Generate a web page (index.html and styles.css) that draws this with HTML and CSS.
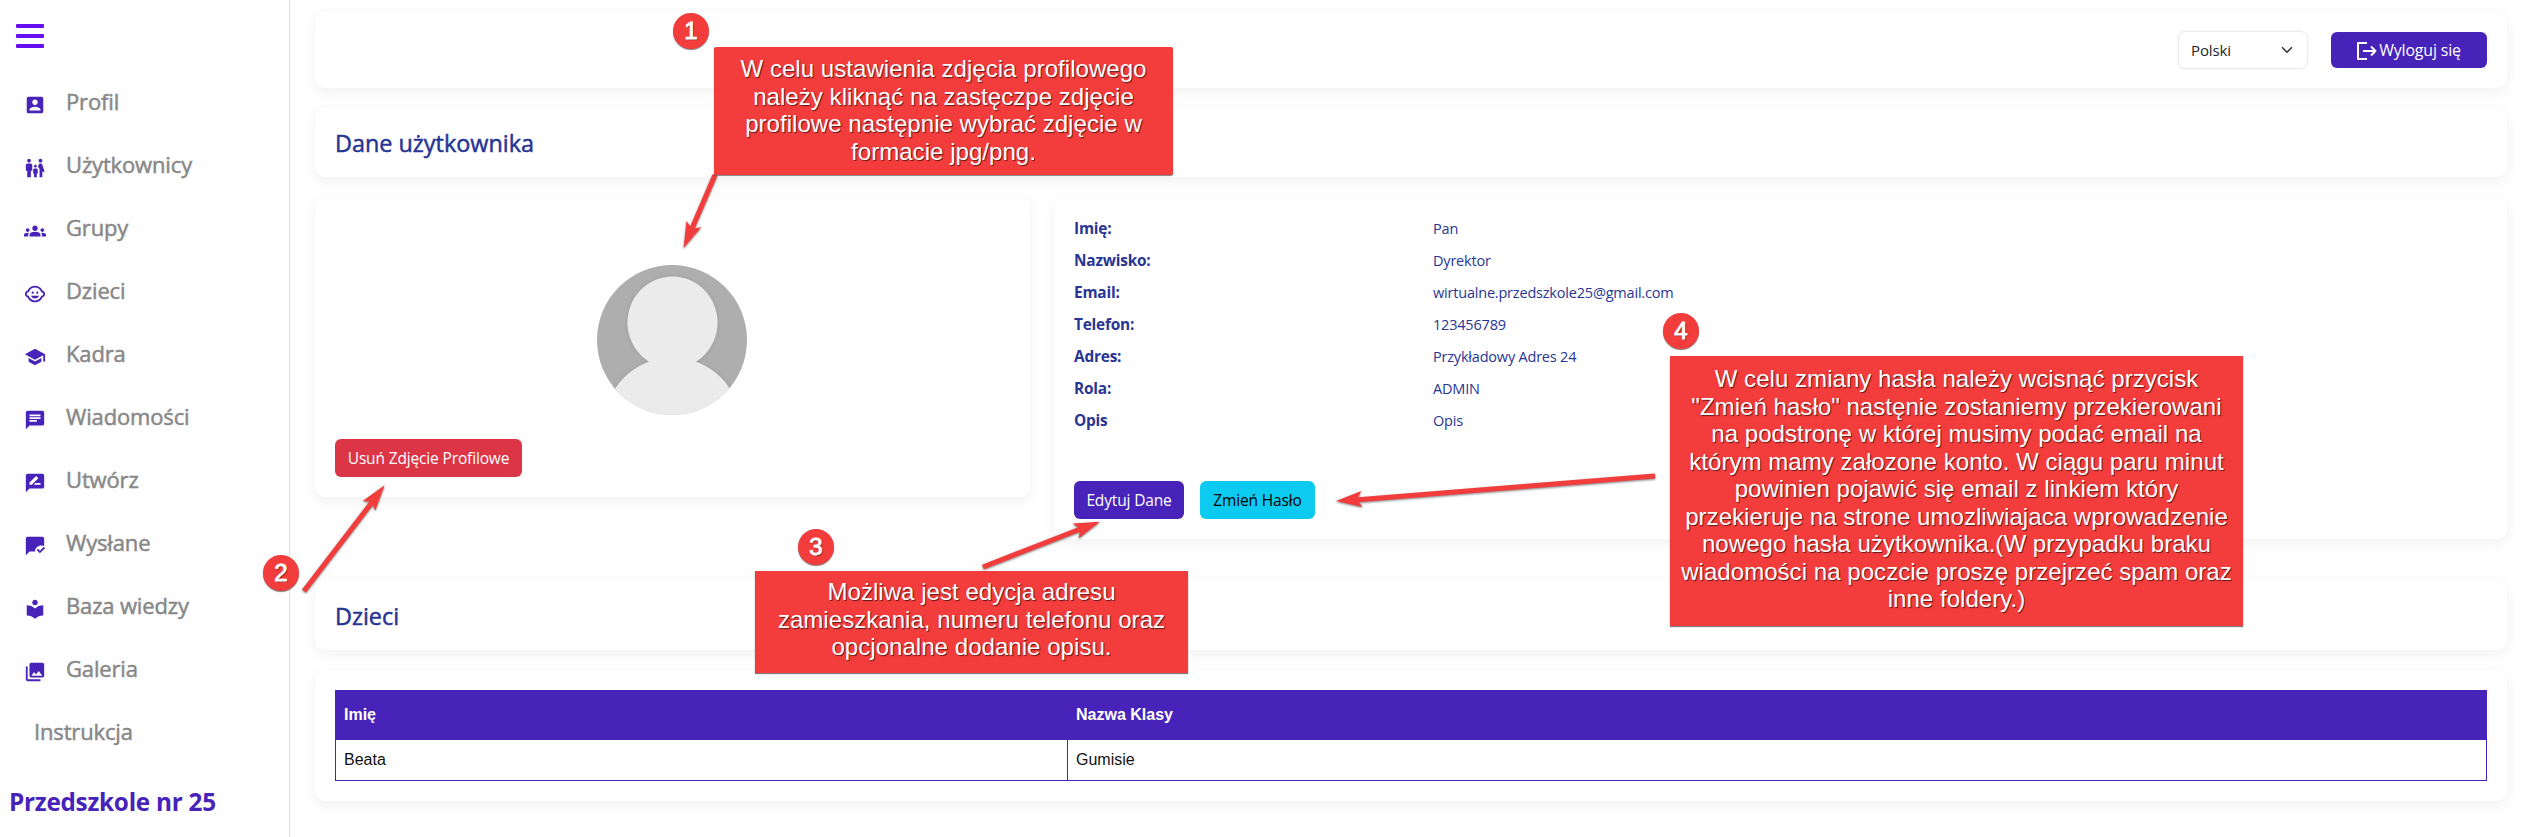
FILE: index.html
```html
<!DOCTYPE html>
<html lang="pl">
<head>
<meta charset="utf-8">
<title>Przedszkole nr 25</title>
<link rel="stylesheet" href="styles.css">
</head>
<body>
<div class="app">
  <aside class="sidebar">
    <button class="burger" aria-label="Menu"><span></span><span></span><span></span></button>
    <nav class="menu">
      <a class="item"><svg viewBox="0 0 24 24"><path d="M3 5v14c0 1.1.89 2 2 2h14c1.1 0 2-.9 2-2V5c0-1.1-.9-2-2-2H5c-1.11 0-2 .9-2 2zm12 4c0 1.66-1.34 3-3 3s-3-1.34-3-3 1.34-3 3-3 3 1.34 3 3zm-9 8c0-2 4-3.1 6-3.1s6 1.1 6 3.1v1H6v-1z"/></svg><span>Profil</span></a>
      <a class="item"><svg viewBox="0 0 24 24"><path d="M16 4c0-1.11.89-2 2-2s2 .89 2 2-.89 2-2 2-2-.89-2-2zm4 18v-6h2.5l-2.54-7.63C19.68 7.55 18.92 7 18.06 7h-.12c-.86 0-1.63.55-1.9 1.37l-.86 2.58c1.08.6 1.82 1.73 1.82 3.05v8h3zm-7.5-10.5c.83 0 1.5-.67 1.5-1.5s-.67-1.5-1.5-1.5S11 9.17 11 10s.67 1.5 1.5 1.5zM5.5 6c1.11 0 2-.89 2-2s-.89-2-2-2-2 .89-2 2 .89 2 2 2zm2 16v-7H9V9c0-1.1-.9-2-2-2H4c-1.1 0-2 .9-2 2v6h1.5v7h4zm6.5 0v-4h1v-4c0-.82-.68-1.5-1.5-1.5h-2c-.82 0-1.5.68-1.5 1.5v4h1v4h3z"/></svg><span>Użytkownicy</span></a>
      <a class="item"><svg viewBox="0 0 24 24"><path d="M12 12.75c1.63 0 3.07.39 4.24.9 1.08.48 1.76 1.56 1.76 2.73V18H6v-1.61c0-1.18.68-2.26 1.76-2.73 1.17-.52 2.61-.91 4.24-.91zM4 13c1.1 0 2-.9 2-2s-.9-2-2-2-2 .9-2 2 .9 2 2 2zm1.13 1.1c-.37-.06-.74-.1-1.13-.1-.99 0-1.93.21-2.78.58C.48 14.9 0 15.62 0 16.43V18h4.5v-1.61c0-.83.23-1.61.63-2.29zM20 13c1.1 0 2-.9 2-2s-.9-2-2-2-2 .9-2 2 .9 2 2 2zm4 3.43c0-.81-.48-1.53-1.22-1.85-.85-.37-1.79-.58-2.78-.58-.39 0-.76.04-1.13.1.4.68.63 1.46.63 2.29V18H24v-1.57zM12 6c1.66 0 3 1.34 3 3s-1.34 3-3 3-3-1.34-3-3 1.34-3 3-3z"/></svg><span>Grupy</span></a>
      <a class="item"><svg viewBox="0 0 24 24"><circle cx="14.5" cy="10.5" r="1.25"/><circle cx="9.5" cy="10.5" r="1.25"/><path d="M22.94 12.66c.04-.21.06-.43.06-.66s-.02-.45-.06-.66c-.25-1.51-1.36-2.74-2.81-3.17-.53-1.12-1.28-2.1-2.19-2.91C16.36 3.85 14.28 3 12 3s-4.36.85-5.94 2.26c-.92.81-1.67 1.8-2.19 2.91-1.45.43-2.56 1.65-2.81 3.17-.04.21-.06.43-.06.66s.02.45.06.66c.25 1.51 1.36 2.74 2.81 3.17.52 1.11 1.27 2.09 2.17 2.89C7.62 20.14 9.71 21 12 21s4.38-.86 5.97-2.28c.9-.8 1.65-1.79 2.17-2.89 1.44-.43 2.55-1.65 2.8-3.17zM19 14c-.1 0-.19-.02-.29-.03-.2.67-.49 1.29-.86 1.86C16.6 17.74 14.45 19 12 19s-4.6-1.26-5.85-3.17c-.37-.57-.66-1.19-.86-1.86-.1.01-.19.03-.29.03-1.1 0-2-.9-2-2s.9-2 2-2c.1 0 .19.02.29.03.2-.67.49-1.29.86-1.86C7.4 6.26 9.55 5 12 5s4.6 1.26 5.85 3.17c.37.57.66 1.19.86 1.86.1-.01.19-.03.29-.03 1.1 0 2 .9 2 2s-.9 2-2 2zM7.5 14c.76 1.77 2.49 3 4.5 3s3.74-1.23 4.5-3h-9z"/></svg><span>Dzieci</span></a>
      <a class="item"><svg viewBox="0 0 24 24"><path d="M5 13.18v4L12 21l7-3.82v-4L12 17l-7-3.82zM12 3L1 9l11 6 9-4.91V17h2V9L12 3z"/></svg><span>Kadra</span></a>
      <a class="item"><svg viewBox="0 0 24 24"><path d="M20 2H4c-1.1 0-1.99.9-1.99 2L2 22l4-4h14c1.1 0 2-.9 2-2V4c0-1.1-.9-2-2-2zM6 9h12v2H6V9zm8 5H6v-2h8v2zm4-6H6V6h12v2z"/></svg><span>Wiadomości</span></a>
      <a class="item"><svg viewBox="0 0 24 24"><path d="M20 2H4c-1.1 0-1.99.9-1.99 2L2 22l4-4h14c1.1 0 2-.9 2-2V4c0-1.1-.9-2-2-2zM6 14v-2.47l6.88-6.88c.2-.2.51-.2.71 0l1.77 1.77c.2.2.2.51 0 .71L8.47 14H6zm12 0h-7.5l2-2H18v2z"/></svg><span>Utwórz</span></a>
      <a class="item"><svg viewBox="0 0 24 24"><path d="M12 18H6l-4 4V4c0-1.1.9-2 2-2h16c1.1 0 2 .9 2 2v8.080A6.980 6.980 0 0 0 19 11.500c-3.870 0-7 2.900-7 6.500zm11-3.660-1.410-1.410-4.240 4.240-2.120-2.120-1.410 1.410L17.340 20z"/></svg><span>Wysłane</span></a>
      <a class="item"><svg viewBox="0 0 24 24"><path d="M12 11.550C9.640 9.350 6.480 8 3 8v11c3.480 0 6.640 1.350 9 3.550 2.360-2.190 5.520-3.550 9-3.550V8c-3.480 0-6.640 1.350-9 3.550zM12 8c1.660 0 3-1.340 3-3s-1.340-3-3-3-3 1.340-3 3 1.340 3 3 3z"/></svg><span>Baza wiedzy</span></a>
      <a class="item"><svg viewBox="0 0 24 24"><path d="M22 16V4c0-1.100-.900-2-2-2H8c-1.100 0-2 .900-2 2v12c0 1.100.900 2 2 2h12c1.100 0 2-.900 2-2zm-11-4l2.030 2.710L16 11l4 5H8l3-4zM2 6v14c0 1.100.900 2 2 2h14v-2H4V6H2z"/></svg><span>Galeria</span></a>
      <a class="item plain"><span>Instrukcja</span></a>
    </nav>
    <div class="brand">Przedszkole nr 25</div>
  </aside>

  <main class="main">
    <header class="card topbar">
      <div class="select"><span>Polski</span><svg viewBox="0 0 16 16"><path d="m2 5 6 6 6-6"/></svg></div>
      <button class="btn logout"><svg viewBox="0 0 20 18"><path d="M10 1H1v16h9M6 9h12M14 4.500 18.500 9 14 13.500"/></svg><span>Wyloguj się</span></button>
    </header>
    <section class="card title"><h2>Dane użytkownika</h2></section>
    <div class="profile">
      <section class="card photo">
        <svg class="avatar" viewBox="0 0 150 150">
          <defs>
            <clipPath id="round"><circle cx="75" cy="75" r="75"/></clipPath>
            <filter id="soft"><feDropShadow dx="0" dy="0" stdDeviation="2" flood-color="#888" flood-opacity=".5"/></filter>
          </defs>
          <g clip-path="url(#round)">
            <rect width="150" height="150" fill="#aeaeae"/>
            <g fill="#ebebeb" filter="url(#soft)"><ellipse cx="75.500" cy="57.500" rx="45" ry="46"/><circle cx="75.500" cy="161" r="68.500"/></g>
          </g>
        </svg>
        <button class="btn danger">Usuń Zdjęcie Profilowe</button>
      </section>
      <section class="card info">
        <dl class="details">
          <dt>Imię:</dt><dd>Pan</dd>
          <dt>Nazwisko:</dt><dd>Dyrektor</dd>
          <dt>Email:</dt><dd>wirtualne.przedszkole25@gmail.com</dd>
          <dt>Telefon:</dt><dd>123456789</dd>
          <dt>Adres:</dt><dd>Przykładowy Adres 24</dd>
          <dt>Rola:</dt><dd>ADMIN</dd>
          <dt>Opis</dt><dd>Opis</dd>
        </dl>
        <div class="actions">
          <button class="btn edit">Edytuj Dane</button>
          <button class="btn password">Zmień Hasło</button>
        </div>
      </section>
    </div>
    <section class="card title second"><h2>Dzieci</h2></section>
    <section class="card list">
      <table>
        <thead><tr><th class="first">Imię</th><th>Nazwa Klasy</th></tr></thead>
        <tbody><tr><td>Beata</td><td>Gumisie</td></tr></tbody>
      </table>
    </section>
  </main>
</div>

<div class="notes">
  <svg class="arrows" viewBox="0 0 2527 837">
    <defs>
      <marker id="head" viewBox="0 0 26 16" refX="25" refY="8" markerWidth="26" markerHeight="16" markerUnits="userSpaceOnUse" orient="auto"><path d="M26 8 0 0 5 8 0 16z" fill="#f33c3c"/></marker>
    </defs>
    <g stroke="#f33c3c" stroke-width="5" fill="none">
      <path d="M715 175 690.500 232"/><path d="M715 175 684 247" stroke="none" marker-end="url(#head)"/>
      <path d="M304 591 373 501"/><path d="M304 591 384 486" stroke="none" marker-end="url(#head)"/>
      <path d="M983 567 1083 528"/><path d="M983 567 1099 522" stroke="none" marker-end="url(#head)"/>
      <path d="M1655 476 1355 500"/><path d="M1655 476 1337 501" stroke="none" marker-end="url(#head)"/>
    </g>
  </svg>
  <span class="num n1">1</span><span class="num n2">2</span><span class="num n3">3</span><span class="num n4">4</span>
  <p class="note b1">W celu ustawienia zdjęcia profilowego<br>należy kliknąć na zastęczpe zdjęcie<br>profilowe następnie wybrać zdjęcie w<br>formacie jpg/png.</p>
  <p class="note b3">Możliwa jest edycja adresu<br>zamieszkania, numeru telefonu oraz<br>opcjonalne dodanie opisu.</p>
  <p class="note b4">W celu zmiany hasła należy wcisnąć przycisk<br>"Zmień hasło" nastęnie zostaniemy przekierowani<br>na podstronę w której musimy podać email na<br>którym mamy załozone konto. W ciągu paru minut<br>powinien pojawić się email z linkiem który<br>przekieruje na strone umozliwiajaca wprowadzenie<br>nowego hasła użytkownika.(W przypadku braku<br>wiadomości na poczcie proszę przejrzeć spam oraz<br>inne foldery.)</p>
</div>
</body>
</html>
```

FILE: styles.css
```css
* { box-sizing: border-box; }
body { margin: 0; background: #fefefe; font-family: "Open Sans", "Noto Sans", sans-serif; overflow: hidden; }
button { border: 0; padding: 0; font: inherit; background: none; }
.app { display: flex; height: 837px; }

.sidebar { width: 290px; border-right: 1px solid #dfdfdf; padding-top: 24px; flex: none; }
.burger { display: flex; flex-direction: column; gap: 6px; width: 28px; margin-left: 16px; }
.burger span { height: 4px; background: #6610f2; border-radius: 1px; }
.menu { margin-top: 22px; }
.item { display: flex; height: 63px; padding-left: 24px; gap: 20px; align-items: center; color: #888; font-size: 22px; letter-spacing: -.15px; white-space: nowrap; -webkit-text-stroke: .5px #888; }
.item svg { width: 22px; height: 22px; fill: #4723b9; stroke: none; margin-top: 7px; }
.item span { padding-bottom: 2px; }
.item.plain { padding-left: 34px; }
.brand { margin: 23px 0 0 9px; line-height: 32px; font-size: 24.300px; font-weight: 700; color: #4723b9; letter-spacing: -.25px; }

.main { flex: 1; padding: 12px 20px 0 25px; }
.card { background: #fff; border-radius: 10px; box-shadow: 0 4px 12px rgba(0,0,0,.05); }
.topbar { height: 76px; display: flex; justify-content: flex-end; align-items: center; padding-right: 20px; gap: 24px; }
.select { width: 128px; height: 36px; border-radius: 6px; box-shadow: 0 0 3px rgba(0,0,0,.22); display: flex; align-items: center; justify-content: space-between; padding: 0 14px 0 12px; font-size: 15px; letter-spacing: -.1px; color: #212529; }
.select svg { width: 12px; height: 12px; fill: none; stroke: #343a40; stroke-width: 2.200; stroke-linecap: round; stroke-linejoin: round; }
.btn { height: 38px; border-radius: 6px; color: #fff; background: #4723b9; font-size: 15.500px; letter-spacing: -.15px; text-align: center; white-space: nowrap; }
.btn.logout { width: 156px; height: 36px; display: flex; align-items: center; justify-content: center; gap: 2px; font-size: 15.900px; }
.logout svg { width: 20px; height: 18px; fill: none; stroke: #fff; stroke-width: 2; stroke-linejoin: round; margin-top: 2px; }
.title { height: 70px; margin-top: 20px; padding-left: 20px; display: flex; align-items: center; }
.title h2 { margin: 1px 0 0; font-size: 23.400px; font-weight: 400; color: #283593; letter-spacing: 0; line-height: 30px; -webkit-text-stroke: .5px #283593; }
.title:not(.second) { height: 69px; }
.profile { display: flex; gap: 24px; margin-top: 20px; align-items: flex-start; }
.photo { width: 715px; height: 300px; padding: 68px 20px 0; display: flex; flex-direction: column; align-items: flex-start; }
.avatar { width: 150px; height: 150px; margin: 0 0 24px 262px; }
.danger { width: 187px; background: #dc3545; }
.info { flex: 1; height: 342px; padding: 16px 20px 0; }
.details { display: grid; grid-template-columns: 359px 1fr; grid-auto-rows: 32px; margin: 0; color: #283593; line-height: 32px; }
.details dt { font-size: 15.400px; font-weight: 700; letter-spacing: -.2px; }
.details dd { margin: 0; font-size: 14.500px; letter-spacing: -.2px; }
.actions { display: flex; gap: 16px; margin-top: 44px; }
.edit { width: 110px; }
.password { width: 115px; background: #0dcaf0; color: #000; }
.second { margin-top: 41px; }
.list { margin-top: 20px; height: 131px; padding: 20px; }
table { width: 100%; border-collapse: collapse; font: 16px/20px "Liberation Sans", Arial, sans-serif; color: #111; }
th, td { text-align: left; padding: 0 8px; }
th { background: #4723b9; color: #fff; height: 49px; border: 1px solid #4723b9; }
td { border: 1px solid #4723b9; height: 41px; }
.first { width: 732px; }

/* Instruction overlay */
.notes { position: absolute; left: 0; top: 0; width: 2527px; height: 837px; font-family: "Liberation Sans", Arial, sans-serif; color: #fff; }
.arrows { position: absolute; width: 2527px; height: 837px; filter: drop-shadow(0 1px 1px rgba(0,0,0,.5)); }
.num { position: absolute; width: 36px; height: 36px; border-radius: 50%; background: #f33c3c; box-shadow: 0 1px 1px rgba(0,0,0,.5); font-size: 24px; line-height: 36px; text-align: center; text-shadow: 1px 1px 1px rgba(0,0,0,.6); -webkit-text-stroke: .9px #fff; }
.n1 { left: 673px; top: 13px; }
.n2 { left: 263px; top: 555px; }
.n3 { left: 798px; top: 529px; }
.n4 { left: 1663px; top: 313px; }
.note { position: absolute; margin: 0; background: #f33c3c; font-size: 24px; line-height: 27.500px; letter-spacing: .05px; text-align: center; white-space: nowrap; text-shadow: 1px 1px 1px rgba(0,0,0,.6); box-shadow: 0 1px 1px rgba(0,0,0,.5); }
.b1 { left: 714px; top: 47px; width: 459px; height: 128px; padding-top: 8px; border-radius: 2px; }
.b3 { left: 755px; top: 571px; width: 433px; height: 102px; padding-top: 7px; }
.b4 { left: 1670px; top: 356px; width: 573px; height: 270px; padding-top: 9px; }
```
